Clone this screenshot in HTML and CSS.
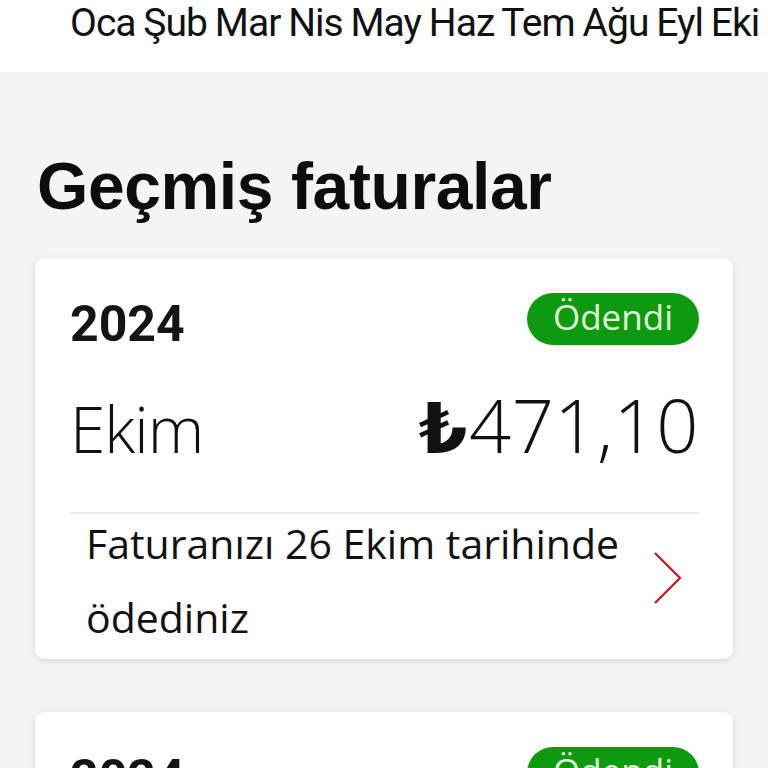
FILE: index.html
```html
<!DOCTYPE html>
<html lang="tr">
<head>
  <meta charset="UTF-8">
  <meta name="viewport" content="width=device-width, initial-scale=1.0">
  <title>Geçmiş faturalar</title>
  <link rel="stylesheet" href="styles.css">
</head>
<body>
  <header class="months">
    <span>Oca</span> <span>Şub</span> <span>Mar</span> <span>Nis</span> <span>May</span>
    <span>Haz</span> <span>Tem</span> <span>Ağu</span> <span>Eyl</span> <span>Eki</span>
  </header>
  <main class="content">
    <h1 class="title">Geçmiş faturalar</h1>

    <section class="bill-card">
      <div class="bill-top">
        <span class="bill-year">2024</span>
        <span class="badge">Ödendi</span>
      </div>
      <div class="bill-main">
        <span class="bill-month">Ekim</span>
        <span class="bill-amount"><span class="lira">₺</span>471,10</span>
      </div>
      <a class="bill-info" href="#">
        <span class="info-text">Faturanızı 26 Ekim tarihinde ödediniz</span>
        <svg class="chevron" width="28" height="52" viewBox="0 0 28 52">
          <path d="M1 1 L26 26 L1 51" fill="none" stroke="#c8141e" stroke-width="2.2"/>
        </svg>
      </a>
    </section>

    <section class="bill-card">
      <div class="bill-top">
        <span class="bill-year">2024</span>
        <span class="badge">Ödendi</span>
      </div>
      <div class="bill-main">
        <span class="bill-month">Eylül</span>
        <span class="bill-amount"><span class="lira">₺</span>471,10</span>
      </div>
    </section>
  </main>
</body>
</html>
```

FILE: styles.css
```css
body {
  margin: 0;
  padding: 0;
  background-color: #f4f4f4;
  color: #111;
  font-family: "Open Sans", Arial, sans-serif;
  overflow: hidden;
}

.months {
  background-color: #fff;
  height: 72px;
  box-sizing: border-box;
  padding-left: 70px;
  white-space: nowrap;
  font-family: Roboto, "Liberation Sans", sans-serif;
  font-size: 39px;
  line-height: 46px;
  letter-spacing: -0.95px;
  word-spacing: -1px;
  color: #111;
}

.content {
  padding: 0 35px;
}

.title {
  margin: 0;
  padding: 79px 0 0 2px;
  font-family: "Liberation Sans", Arial, sans-serif;
  font-weight: bold;
  font-size: 66px;
  line-height: 70px;
  letter-spacing: -0.4px;
  color: #0d0d0d;
}

.bill-card {
  background: #fff;
  border-radius: 9px;
  box-shadow: 0 2px 6px rgba(0, 0, 0, 0.13);
  margin-top: 37px;
  margin-bottom: 53px;
  padding: 35px 34px 0 35px;
  height: 401px;
  box-sizing: border-box;
}

.bill-top {
  display: flex;
  justify-content: space-between;
  align-items: center;
  height: 52px;
}

.bill-year {
  font-family: Roboto, Arial, sans-serif;
  font-weight: bold;
  font-size: 50px;
  line-height: 52px;
  color: #141414;
  margin-top: 10px;
}

.badge {
  background-color: #0e9a0e;
  color: #e2f8da;
  border-radius: 26px;
  width: 172px;
  height: 52px;
  box-sizing: border-box;
  text-align: center;
  font-size: 35px;
  line-height: 48px;
}

.bill-main {
  display: flex;
  justify-content: space-between;
  align-items: baseline;
  height: 169px;
  border-bottom: 2px solid #ececec;
  box-sizing: border-box;
  padding-top: 40px;
}

.bill-month {
  font-weight: 300;
  font-size: 64px;
  line-height: 80px;
  letter-spacing: -1px;
  color: #111;
}

.bill-amount {
  font-weight: 300;
  font-size: 74px;
  line-height: 80px;
  letter-spacing: 0.5px;
  color: #111;
}

.lira {
  font-family: "DejaVu Sans", sans-serif;
  font-weight: bold;
  font-size: 70px;
  margin-right: 1px;
}

.bill-info {
  display: flex;
  align-items: flex-start;
  justify-content: space-between;
  padding: 0 17px 0 16px;
  color: #111;
  text-decoration: none;
}

.info-text {
  width: 560px;
  font-size: 41px;
  line-height: 74px;
  margin-top: -8px;
}

.chevron {
  display: block;
  margin-top: 38px;
}
```
